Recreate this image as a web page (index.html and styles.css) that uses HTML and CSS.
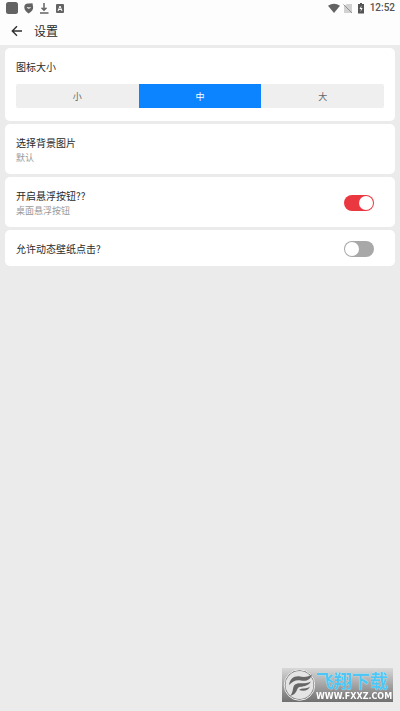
FILE: index.html
```html
<!DOCTYPE html>
<html lang="zh-CN">
<head>
<meta charset="utf-8">
<meta name="viewport" content="width=device-width, initial-scale=1">
<title>设置</title>
<link rel="stylesheet" href="styles.css">
</head>
<body>
<div class="top">
  <div class="status">
    <svg class="status-icons" width="66" height="14" viewBox="0 0 66 14" aria-hidden="true">
      <rect x="0" y="1" width="12" height="12" rx="2.5" fill="#636363"/>
      <path d="M18.3 6.500C18 3.600 20.500 2 23 2.600L26.500 2.200 27 5.500C27.800 9 25 11 22.500 12.500 20.500 11 18.500 9.500 18.300 6.500Z" fill="#636363"/>
      <path d="M20.800 6C21.500 8.300 24 8.300 25 6L23 6.500Z" fill="#fff"/>
      <path d="M38 2V9M35.500 6.800L38 9.300 40.500 6.800M34 12H42.500" fill="none" stroke="#636363" stroke-width="1.500"/>
      <rect x="50" y="3" width="8" height="9" rx="1" fill="#636363"/>
      <path d="M52 10L54 5 56 10M52.700 8.500H55.300" fill="none" stroke="#fff" stroke-width="1"/>
    </svg>
    <div class="status-right">
      <svg width="38" height="14" viewBox="0 0 38 14" aria-hidden="true">
        <path d="M0 4.800Q6 .8 12 4.800L6 12Z" fill="#636363"/>
        <path d="M16 5L19 3H24V12H16Z" fill="#d2d2d2"/>
        <path d="M15.500 3.500L24 12" stroke="#929292" stroke-width="1"/>
        <path d="M30 3H32V2H34V3H36V12.500H30Z" fill="#555"/>
        <path d="M33.500 4.500L31.500 8H33L32.500 11 34.600 7H33.100Z" fill="#fff"/>
      </svg>
      <span class="clock">12:52</span>
    </div>
  </div>
  <header class="bar">
    <button class="back" type="button" aria-label="返回">
      <svg width="12" height="12" viewBox="0 0 12 12"><path d="M11 6H1.500M6 1.300L1.300 6 6 10.700" fill="none" stroke="#303030" stroke-width="1.400"/></svg>
    </button>
    <h1 class="title">设置</h1>
  </header>
</div>
<main class="list">
  <section class="card size-card">
    <h2 class="label">图标大小</h2>
    <div class="segments">
      <button class="segment" type="button">小</button>
      <button class="segment selected" type="button" aria-pressed="true">中</button>
      <button class="segment" type="button">大</button>
    </div>
  </section>
  <section class="card row">
    <div>
      <h2 class="label">选择背景图片</h2>
      <p class="hint">默认</p>
    </div>
  </section>
  <section class="card row">
    <div>
      <label class="label" for="float">开启悬浮按钮??</label>
      <p class="hint">桌面悬浮按钮</p>
    </div>
    <input class="switch" id="float" type="checkbox" checked>
  </section>
  <section class="card row single">
    <label class="label" for="wallpaper">允许动态壁纸点击?</label>
    <input class="switch" id="wallpaper" type="checkbox">
  </section>
</main>
<div class="mark">
  <svg width="33" height="34" viewBox="0 0 33 34" aria-hidden="true">
    <circle cx="17.500" cy="17" r="15.300" fill="#777" stroke="#eee" stroke-width="1"/>
    <circle cx="17.500" cy="17" r="14" fill="#e4e4e4"/>
    <path d="M7 17C8 11 12 7.500 18 8.500 23 9.500 27 8.500 30 6.500 28.500 12 24 13.500 19 12.500 14 11.500 11 13 7 17Z" fill="#666"/>
    <path d="M8 28C12 24 10 19 13 16.500 17 13.500 21 17 29 13.500 26 18.500 20 18.500 17.500 19 14 20 16 26 8 28Z" fill="#666"/>
    <path d="M17 22C20 19.500 24 21.500 28 18.500 26 23.500 21 23 17 22Z" fill="#666"/>
  </svg>
  <div class="mark-text">
    <span class="mark-name">飞翔下载</span>
    <span class="mark-url">WWW.FXXZ.COM</span>
  </div>
</div>
</body>
</html>
```
FILE: styles.css
```css
* { box-sizing: border-box; }
body {
  margin: 0;
  min-height: 100vh;
  background: #ebebeb;
  color: #2a2a2a;
  font-family: "Noto Sans CJK SC", sans-serif;
  font-size: 10px;
}
h1, h2, p { margin: 0; font-weight: 400; }
button { border: 0; padding: 0; font: inherit; }
svg { display: block; }
.top { background: #fdfdfd; }
.status {
  display: flex;
  justify-content: space-between;
  align-items: center;
  height: 16px;
  padding: 0 5px 0 6px;
}
.status-right { display: flex; align-items: center; gap: 4px; }
.clock { color: #555; font: 500 10px/16px Roboto, sans-serif; }
.bar {
  display: flex;
  align-items: center;
  gap: 11px;
  height: 29px;
  padding: 0 11px;
}
.back { background: none; }
.title { font-size: 12px; line-height: 18px; }
.list {
  display: flex;
  flex-direction: column;
  gap: 3px;
  padding: 3px 5px;
}
.card { background: #fff; border-radius: 5px; padding: 10px 11px; }
.label { display: block; font-size: 10px; line-height: 17px; }
.hint { color: #999; font-size: 9px; line-height: 14px; }
.size-card { padding-bottom: 13px; }
.segments {
  display: flex;
  margin-top: 9px;
  border-radius: 2px;
  overflow: hidden;
}
.segment {
  flex: 1;
  height: 24px;
  background: #efefef;
  color: #666;
  font-size: 9px;
}
.segment.selected { background: #0d84ff; color: #fff; }
.row {
  display: flex;
  justify-content: space-between;
  align-items: center;
  padding-right: 21px;
  padding-bottom: 9px;
}
.single { min-height: 36px; }
.switch {
  appearance: none;
  display: flex;
  width: 30px;
  height: 16px;
  margin: 0;
  padding: 1px;
  border-radius: 8px;
  background: #a8a8a8;
}
.switch::before {
  content: "";
  width: 14px;
  height: 14px;
  border-radius: 50%;
  background: #fff;
}
.switch:checked { justify-content: flex-end; background: #eb3740; }
.mark {
  position: fixed;
  right: 7px;
  bottom: 9px;
  display: flex;
  gap: 1px;
  width: 111px;
  height: 34px;
  background: linear-gradient(#d8d8d8, #707070);
}
.mark-text { display: flex; flex-direction: column; white-space: nowrap; }
.mark-name {
  color: #4cc6f5;
  font-size: 18px;
  line-height: 25px;
  font-weight: 700;
  text-shadow: 0 0 1px #fff;
}
.mark-url {
  color: #fff;
  font: 700 8px/8px "DejaVu Sans", sans-serif;
}
```
